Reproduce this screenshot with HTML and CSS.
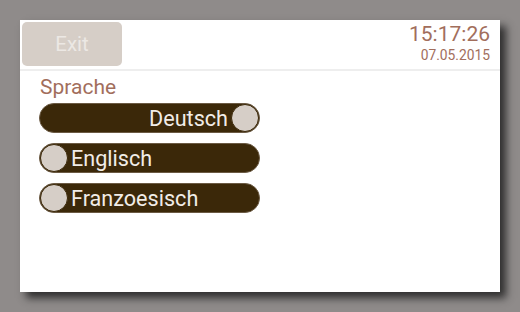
FILE: index.html
```html
<!DOCTYPE html>
<html lang="de">
<head>
    <meta charset="UTF-8">
    <title>Sprache</title>
    <link rel="stylesheet" href="styles.css">
</head>
<body>

<div class="panel">
    <div class="header">
        <button class="exit">Exit</button>
        <div class="clock">
            <div class="time">15:17:26</div>
            <div class="date">07.05.2015</div>
        </div>
    </div>
    <div class="content">
        <div class="label">Sprache</div>
        <div class="toggle on"><span>Deutsch</span><i class="knob"></i></div>
        <div class="toggle"><i class="knob"></i><span>Englisch</span></div>
        <div class="toggle"><i class="knob"></i><span>Franzoesisch</span></div>
    </div>
</div>

</body>
</html>
```

FILE: styles.css
```css
body {
    margin: 0;
    padding: 20px;
    background-color: #8f8b8a;
    font-family: Roboto, "Liberation Sans", sans-serif;
}
.panel {
    width: 480px;
    height: 272px;
    background-color: white;
    box-shadow: 6px 6px 8px rgba(30, 30, 30, 0.85);
}
.header {
    display: flex;
    justify-content: space-between;
    align-items: flex-start;
    height: 47px;
    padding: 2px 10px 0 2px;
    border-bottom: 2px solid #eeeeee;
}
.exit {
    width: 100px;
    height: 44px;
    border: none;
    border-radius: 5px;
    background-color: #d6cec7;
    color: #ece8e4;
    font-family: inherit;
    font-size: 20.5px;
    padding: 0;
}
.clock {
    text-align: right;
    color: #a26e5c;
}
.time {
    font-size: 21px;
    line-height: 24px;
}
.date {
    font-size: 13.8px;
    line-height: 16px;
    margin-top: 1px;
}
.content {
    padding: 5px 0 0 19px;
}
.label {
    color: #a26e5c;
    font-size: 21px;
    line-height: 22px;
    margin-left: 1px;
    margin-bottom: 5px;
}
.toggle {
    display: flex;
    align-items: center;
    gap: 3px;
    width: 219px;
    height: 28px;
    margin-bottom: 10px;
    border: 1px solid #6b5a44;
    border-radius: 15px;
    background-color: #3b2809;
    color: #f1ece7;
    font-size: 21.6px;
}
.toggle.on {
    justify-content: flex-end;
}
.knob {
    width: 28px;
    height: 28px;
    border-radius: 50%;
    background-color: #d6cec7;
    box-sizing: border-box;
    border: 1px solid #3b2809;
}
```
